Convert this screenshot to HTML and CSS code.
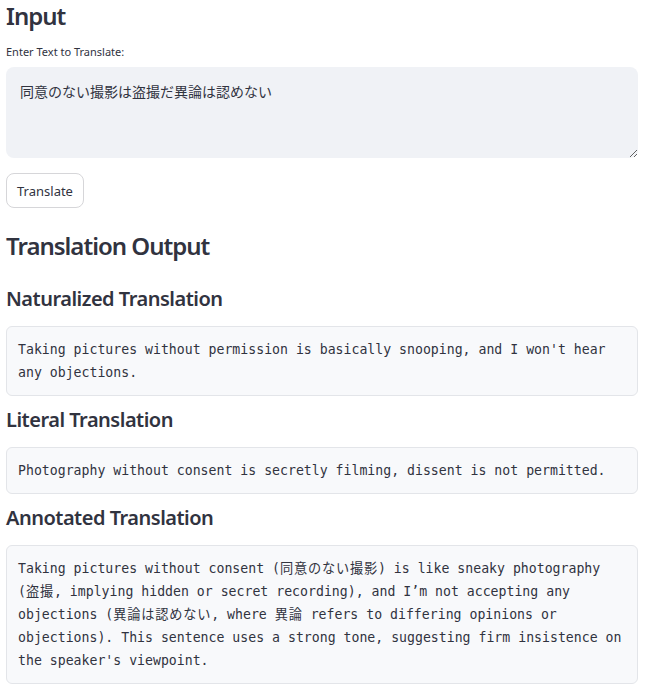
FILE: index.html
```html
<!DOCTYPE html>
<html lang="en">
<head>
<meta charset="utf-8">
<title>Translator</title>
<link rel="stylesheet" href="styles.css">
</head>
<body>
<main class="app">
  <h2 class="title title-in">Input</h2>
  <label class="label" for="src">Enter Text to Translate:</label>
  <textarea id="src" class="input">同意のない撮影は盗撮だ異論は認めない</textarea>
  <button class="btn" type="button">Translate</button>

  <h2 class="title title-out">Translation Output</h2>

  <h3 class="sub sub-first">Naturalized Translation</h3>
  <pre class="code">Taking pictures without permission is basically snooping, and I won't hear any objections.</pre>

  <h3 class="sub">Literal Translation</h3>
  <pre class="code">Photography without consent is secretly filming, dissent is not permitted.</pre>

  <h3 class="sub">Annotated Translation</h3>
  <pre class="code">Taking pictures without consent (<span class="jp">同意のない撮影</span>) is like sneaky photography (<span class="jp">盗撮</span>, implying hidden or secret recording), and I’m not accepting any objections (<span class="jp">異論は認めない</span>, where <span class="jp">異論</span> refers to differing opinions or objections). This sentence uses a strong tone, suggesting firm insistence on the speaker's viewpoint.</pre>
</main>
</body>
</html>
```
FILE: styles.css
```css
html, body {
  margin: 0;
  padding: 0;
  background: #ffffff;
}
body {
  font-family: "Noto Sans", "Noto Sans CJK JP", sans-serif;
  color: #31333f;
}
.app {
  width: 632px;
  margin-left: 6px;
  display: flex;
  flex-direction: column;
  align-items: flex-start;
}
.title {
  margin: 0;
  font-size: 24px;
  line-height: 30px;
  font-weight: 600;
  letter-spacing: -1px;
}
.title-in {
  line-height: 32px;
}
.title-out {
  margin-top: 22px;
  line-height: 32px;
}
.label {
  margin-top: 12px;
  font-size: 11px;
  line-height: 16px;
}
.input {
  margin-top: 7px;
  box-sizing: border-box;
  width: 632px;
  height: 91px;
  border: none;
  border-radius: 8px;
  background: #f0f2f6;
  padding: 13px 14px;
  font-family: "Noto Sans CJK JP", sans-serif;
  font-size: 14px;
  line-height: 22px;
  color: #31333f;
  outline: none;
}
.btn {
  margin-top: 15px;
  height: 35px;
  width: 78px;
  box-sizing: border-box;
  border: 1px solid #d6d6d9;
  border-radius: 8px;
  background: #fff;
  font-family: "Noto Sans", sans-serif;
  font-size: 13px;
  color: #31333f;
  padding: 0;
}
.sub {
  margin: 10px 0 0;
  font-size: 20px;
  line-height: 28px;
  font-weight: 600;
  letter-spacing: -0.5px;
}
.sub-first {
  margin-top: 23px;
}
.code {
  margin: 13px 0 0;
  box-sizing: border-box;
  width: 632px;
  background: #f8f9fb;
  border: 1px solid #e3e5e9;
  border-radius: 6px;
  padding: 11px 11px 11px;
  font-family: "DejaVu Sans Mono", "Noto Sans CJK JP", monospace;
  font-size: 13.2px;
  line-height: 23px;
  color: #31333f;
  white-space: pre-wrap;
  word-break: normal;
}
.jp {
  letter-spacing: 0.8px;
}
```
